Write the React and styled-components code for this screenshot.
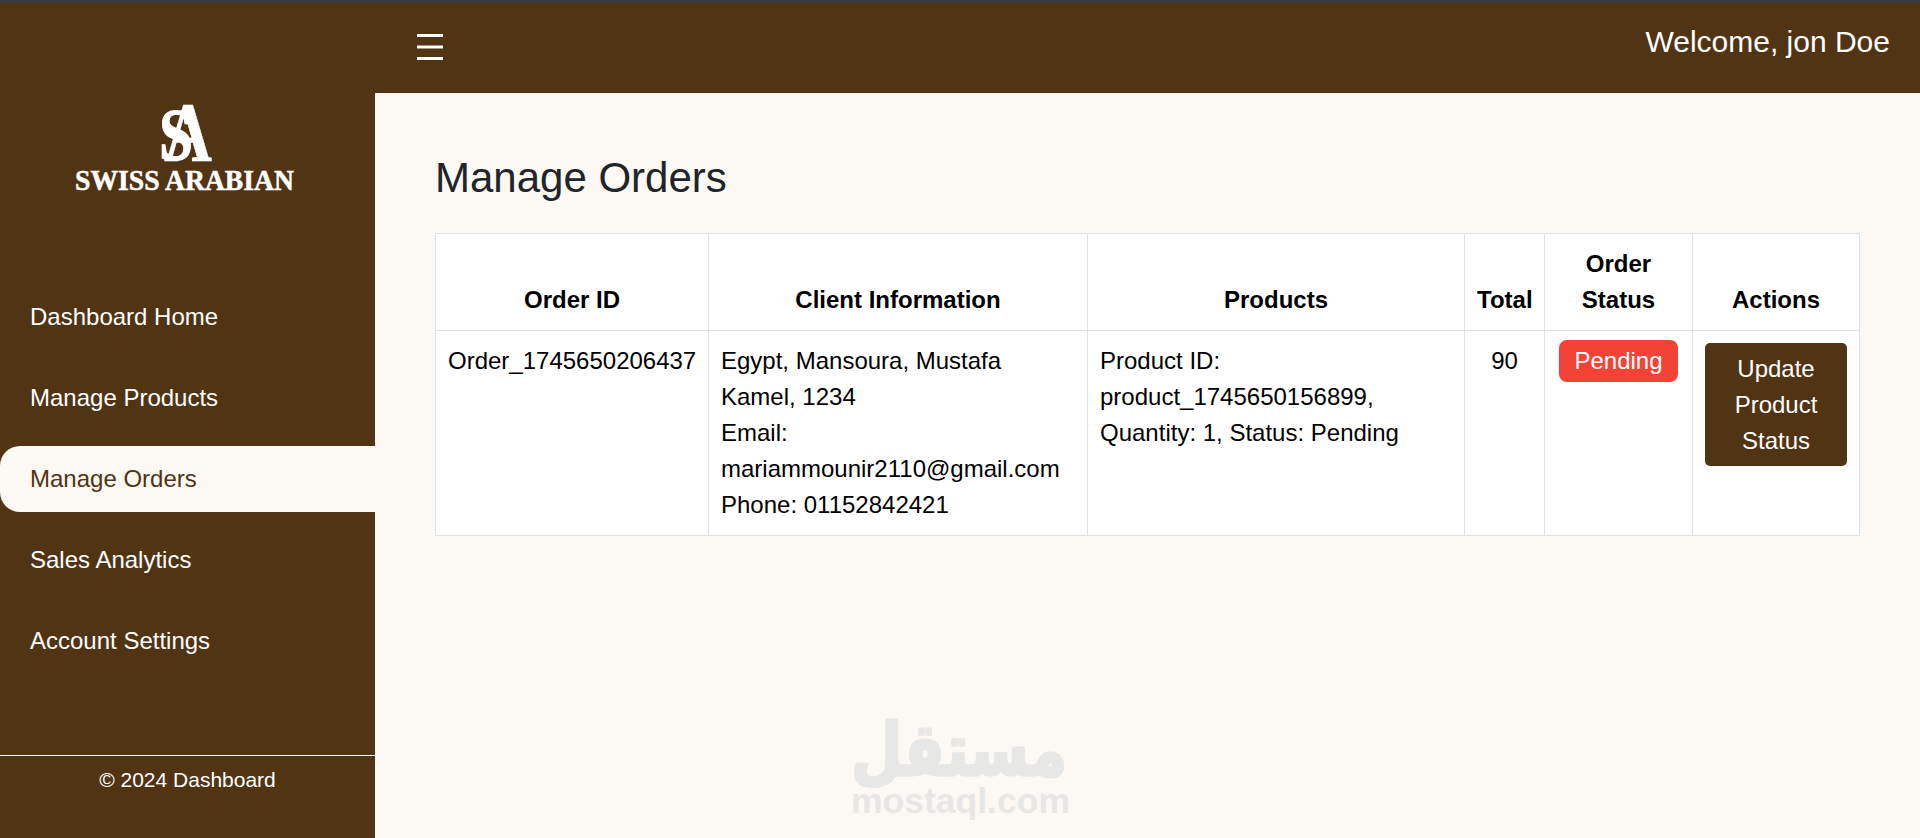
import styled, { createGlobalStyle } from 'styled-components'

const GlobalStyle = createGlobalStyle`
    * { box-sizing: border-box; }
    html, body { margin: 0; height: 100%; }
    body {
        font-family: "Liberation Sans", Arial, sans-serif;
        font-size: 24px;
        line-height: 1.5;
        color: #212529;
        background: #fcf8f3;
        overflow: hidden;
    }
`

const Page = styled.div`
    display: flex;
    height: 100vh;
    border-top: 3px solid #3c3b40;
`

const Sidebar = styled.aside`
    width: 375px;
    flex-shrink: 0;
    display: flex;
    flex-direction: column;
    background: #513413;
    color: #fff;
`

const LogoWrap = styled.div`
    height: 281px;
    padding: 66px 0 0 75px;
    svg { display: block; }
`

const Nav = styled.nav`
    display: flex;
    flex-direction: column;
    gap: 15px;
`

const NavItem = styled.a`
    display: block;
    height: 66px;
    line-height: 66px;
    padding-left: 30px;
    color: ${p => (p.$active ? '#513413' : '#fff')};
    background: ${p => (p.$active ? '#fcf8f3' : 'transparent')};
    border-radius: 20px 0 0 20px;
`

const SideFooter = styled.footer`
    margin-top: auto;
    height: 83px;
    padding-top: 8px;
    border-top: 1px solid #fff;
    text-align: center;
    font-size: 21px;
    line-height: 31px;
`

const Main = styled.div`
    position: relative;
    flex: 1;
    display: flex;
    flex-direction: column;
    min-width: 0;
`

const Header = styled.header`
    height: 90px;
    display: flex;
    justify-content: space-between;
    align-items: flex-start;
    padding: 16px 30px 0 42px;
    background: #513413;
    color: #fff;
    font-size: 30px;
    line-height: 45px;
`

const Burger = styled.svg`
    display: block;
    margin-top: 15px;
`

const Content = styled.main`
    padding: 53px 60px 0;
`

const Title = styled.h2`
    margin: 0 0 24px;
    font-size: 42px;
    font-weight: 400;
    line-height: 63px;
`

const OrdersTable = styled.table`
    width: 1424px;
    table-layout: fixed;
    border-collapse: collapse;
    background: #fff;
    color: #000;

    th, td {
        border: 1px solid #dee2e6;
        padding: 12px;
    }
    th {
        text-align: center;
        vertical-align: bottom;
        font-weight: 700;
    }
    td {
        vertical-align: top;
    }
`

const CenterCell = styled.td`
    text-align: center;
`

const StatusBadge = styled.span`
    padding: 7px 15px 8px;
    border-radius: 8px;
    background: #f44336;
    color: #fff;
`

const UpdateButton = styled.button`
    display: block;
    width: 100%;
    padding: 7.5px 12px;
    border: 0;
    border-radius: 5px;
    background: #513413;
    color: #fff;
    font: inherit;
    text-align: center;
`

const Watermark = styled.div`
    position: absolute;
    left: 476px;
    top: 705px;
    width: 217px;
    display: flex;
    flex-direction: column;
    color: #e7e7e5;
    pointer-events: none;
    svg { display: block; overflow: visible; }
`

const WatermarkLatin = styled.div`
    font-weight: 700;
    font-size: 35.5px;
    line-height: 36px;
    white-space: nowrap;
`

const Logo = () => (
    <svg width="222" height="130" viewBox="0 -30 222 130" role="img" aria-label="Swiss Arabian">
        <g fontFamily="'Liberation Serif', serif" fontWeight="700" fill="#fff" stroke="#fff">
            <text x="89" y="62" fontSize="84" textLength="48" lengthAdjust="spacingAndGlyphs" strokeWidth="0.5">A</text>
            <text x="84" y="61" fontSize="74" textLength="34" lengthAdjust="spacingAndGlyphs" strokeWidth="1.2">S</text>
            <text x="0" y="91" fontSize="29" textLength="219" lengthAdjust="spacingAndGlyphs" strokeWidth="0.5">SWISS ARABIAN</text>
        </g>
    </svg>
)

// the watermark logo, round ends come from the stroke on real text
const WatermarkLogo = () => (
    <svg width="217" height="75" viewBox="0 0 217 75" role="img" aria-label="مستقل">
        <text
            x="216"
            y="67"
            fontFamily="'DejaVu Sans', sans-serif"
            fontWeight="700"
            fontSize="72"
            textLength="216"
            lengthAdjust="spacingAndGlyphs"
            fill="#e7e7e5"
            stroke="#e7e7e5"
            strokeWidth="3"
            strokeLinejoin="round"
            strokeLinecap="round"
            direction="rtl"
        >
            مستقل
        </text>
    </svg>
)

const links = ['Dashboard Home', 'Manage Products', 'Manage Orders', 'Sales Analytics', 'Account Settings']

const App = () => (
    <>
        <GlobalStyle />
        <Page>
            <Sidebar>
                <LogoWrap><Logo /></LogoWrap>
                <Nav>
                    {links.map(link => (
                        <NavItem key={link} $active={link === 'Manage Orders'}>{link}</NavItem>
                    ))}
                </Nav>
                <SideFooter>© 2024 Dashboard</SideFooter>
            </Sidebar>
            <Main>
                <Header>
                    <Burger width="26" height="26" viewBox="0 0 26 26" fill="none" stroke="#fff" strokeWidth="3">
                        <path d="M0 1.5h26M0 13h26M0 24.5h26" />
                    </Burger>
                    <span>Welcome, jon Doe</span>
                </Header>
                <Content>
                    <Title>Manage Orders</Title>
                    <OrdersTable>
                        <colgroup>
                            <col width="273" />
                            <col width="379" />
                            <col width="377" />
                            <col width="80" />
                            <col width="148" />
                            <col width="167" />
                        </colgroup>
                        <thead>
                            <tr>
                                <th>Order ID</th>
                                <th>Client Information</th>
                                <th>Products</th>
                                <th>Total</th>
                                <th>Order Status</th>
                                <th>Actions</th>
                            </tr>
                        </thead>
                        <tbody>
                            <tr>
                                <td>Order_1745650206437</td>
                                <td>
                                    Egypt, Mansoura, Mustafa Kamel, 1234<br />
                                    Email: mariammounir2110@gmail.com<br />
                                    Phone: 01152842421
                                </td>
                                <td>Product ID: product_1745650156899, Quantity: 1, Status: Pending</td>
                                <CenterCell>90</CenterCell>
                                <CenterCell><StatusBadge>Pending</StatusBadge></CenterCell>
                                <td><UpdateButton>Update Product Status</UpdateButton></td>
                            </tr>
                        </tbody>
                    </OrdersTable>
                </Content>
                <Watermark>
                    <WatermarkLogo />
                    <WatermarkLatin>mostaql.com</WatermarkLatin>
                </Watermark>
            </Main>
        </Page>
    </>
)

export default App
